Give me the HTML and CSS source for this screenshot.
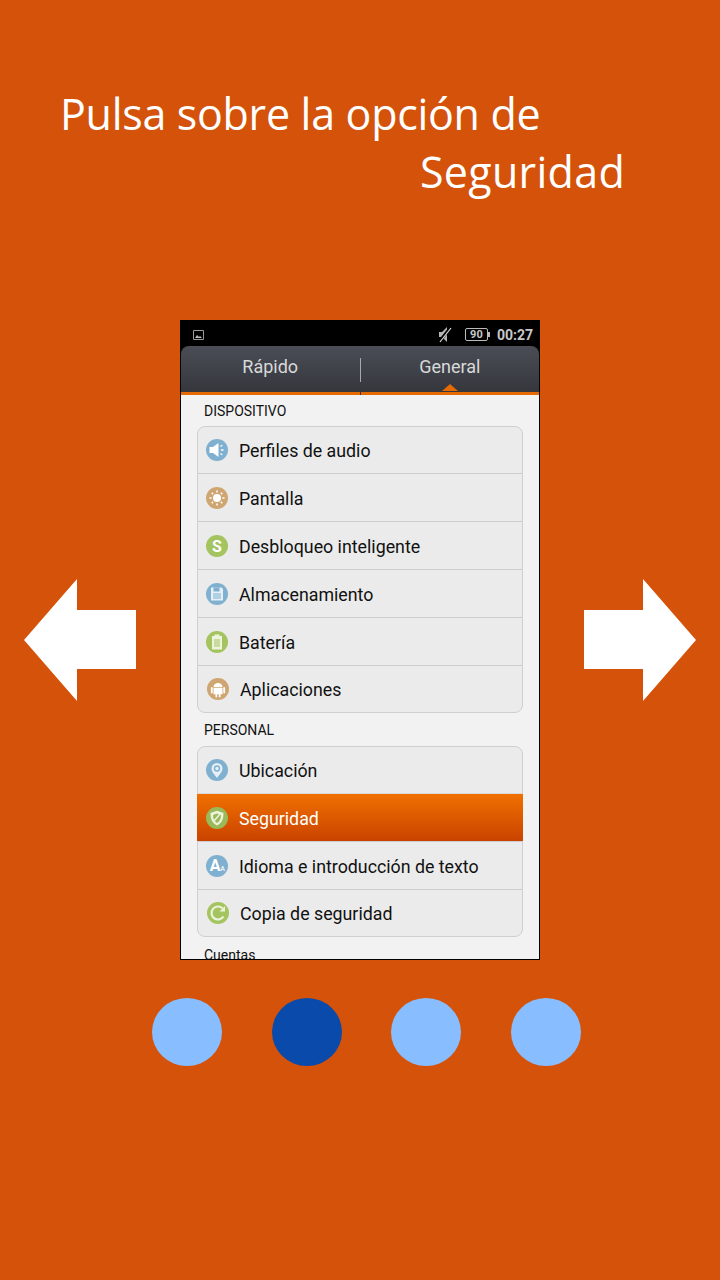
FILE: index.html
```html
<!DOCTYPE html>
<html lang="en">
<head>
    <meta charset="UTF-8">
    <meta name="viewport" content="width=device-width, initial-scale=1.0">
    <title>Seguridad</title>
    <link rel="stylesheet" href="styles.css">
</head>
<body>
    <header class="title">
        <p class="title-line">Pulsa sobre la opción de</p>
        <p class="title-line title-line-end">Seguridad</p>
    </header>

    <main class="stage">
        <svg class="arrow" viewBox="0 0 112 122"><path d="M0 61 53 0V31H112V90H53V122Z"/></svg>

        <div class="phone">
            <div class="status">
                <svg class="status-pic" viewBox="0 0 11 10"><path d="M.5.5h10v9H.5z" fill="none" stroke="#999"/><path d="M2 8 4 5l2 2 1-1 2 2z" fill="#bbb"/></svg>
                <svg class="status-mute" viewBox="0 0 14 17"><path d="M1 6h3l5-5v15l-5-5H1z" fill="#b5b5b5"/><path d="M1 16 13 1" stroke="#000" stroke-width="3"/><path d="M2 16 13 2" stroke="#ddd" stroke-width="1.200"/></svg>
                <div class="battery"><span class="battery-body">90</span><span class="battery-tip"></span></div>
                <span class="clock">00:27</span>
            </div>

            <nav class="tabs">
                <span class="tab">Rápido</span>
                <span class="tab-divider"></span>
                <span class="tab tab-active">General</span>
            </nav>

            <div class="content">
                <h2 class="section">DISPOSITIVO</h2>
                <ul class="group">
                    <li class="row">
                        <svg class="icon" viewBox="0 0 22 22"><circle cx="11" cy="11" r="11" fill="#7fb0d0"/><path d="M3.500 8h3.500l5.500-4v14L7 14H3.500z" fill="#fff"/><path d="M14.500 7.500l1.800-1.200M15 11h2.500M14.500 14.500l1.800 1.200" stroke="#fff" stroke-width="1.300"/></svg>
                        <span>Perfiles de audio</span>
                    </li>
                    <li class="row">
                        <svg class="icon" viewBox="0 0 22 22"><circle cx="11" cy="11" r="11" fill="#cfa672"/><circle cx="11" cy="11" r="4" fill="#fff"/><path d="M11 3.500v2M11 16.500v2M3.500 11h2M16.500 11h2M5.700 5.700l1.400 1.400M14.900 14.900l1.400 1.400M5.700 16.300l1.400-1.400M14.900 7.100l1.400-1.400" stroke="#fff" stroke-width="1.500"/></svg>
                        <span>Pantalla</span>
                    </li>
                    <li class="row">
                        <svg class="icon" viewBox="0 0 22 22"><circle cx="11" cy="11" r="11" fill="#a3c45f"/><text class="icon-letter" x="11" y="16.500" text-anchor="middle">S</text></svg>
                        <span>Desbloqueo inteligente</span>
                    </li>
                    <li class="row">
                        <svg class="icon" viewBox="0 0 22 22"><circle cx="11" cy="11" r="11" fill="#7fb0d0"/><path d="M5 4.500h10.500L17 6v11.500H5z" fill="#e6eff5"/><path d="M7.500 4.500h6v4h-6z" fill="#7fb0d0"/><path d="M7 11h8M7 13h8M7 15h8" stroke="#7fb0d0" stroke-width="1"/></svg>
                        <span>Almacenamiento</span>
                    </li>
                    <li class="row">
                        <svg class="icon" viewBox="0 0 22 22"><circle cx="11" cy="11" r="11" fill="#a3c45f"/><path d="M8.500 3.500h5V5H16v13.500H6V5h2.500z" fill="#eef3dc"/><path d="M8 9h6M8 11h6M8 13h6M8 15h6" stroke="#a3c45f" stroke-width="1"/></svg>
                        <span>Batería</span>
                    </li>
                    <li class="row row-shift">
                        <svg class="icon" viewBox="0 0 22 22"><circle cx="11" cy="11" r="11" fill="#cfa672"/><path d="M6.500 9a4.500 4 0 0 1 9 0z" fill="#fff"/><path d="M6.500 9.800h9v6.400h-2v3h-1.700v-3h-1.600v3H8.500v-3h-2z" fill="#fff"/><path d="M4.800 10v4.500M17.200 10v4.500" stroke="#fff" stroke-width="1.800" stroke-linecap="round"/></svg>
                        <span>Aplicaciones</span>
                    </li>
                </ul>

                <h2 class="section section-next">PERSONAL</h2>
                <ul class="group">
                    <li class="row">
                        <svg class="icon" viewBox="0 0 22 22"><circle cx="11" cy="11" r="11" fill="#7fb0d0"/><path d="M11 19C8 15 5.500 12.500 5.500 9.500a5.500 5.500 0 0 1 11 0C16.500 12.500 14 15 11 19z" fill="#e6eff5"/><circle cx="11" cy="9.500" r="2.500" fill="none" stroke="#7fb0d0" stroke-width="1.400"/></svg>
                        <span>Ubicación</span>
                    </li>
                    <li class="row row-selected">
                        <svg class="icon" viewBox="0 0 22 22"><circle cx="11" cy="11" r="11" fill="#9aba5a"/><path d="M11 3.800 17.500 6c0 6-1.500 10-6.500 12.500C6 16 4.500 12 4.500 6z" fill="#eef3dc"/><path d="M11 6.500 15 8c0 3.500-1 6-4 8-3-2-4-4.500-4-8z" fill="#9aba5a"/><path d="M8 14l6-7" stroke="#eef3dc" stroke-width="1.500"/></svg>
                        <span>Seguridad</span>
                    </li>
                    <li class="row">
                        <svg class="icon" viewBox="0 0 22 22"><circle cx="11" cy="11" r="11" fill="#7fb0d0"/><text class="icon-letter" x="9" y="16" text-anchor="middle">A</text><text class="icon-letter-small" x="16.500" y="16" text-anchor="middle">A</text></svg>
                        <span>Idioma e introducción de texto</span>
                    </li>
                    <li class="row row-shift">
                        <svg class="icon" viewBox="0 0 22 22"><circle cx="11" cy="11" r="11" fill="#a3c45f"/><path d="M16.500 14.500A6.500 6.500 0 1 1 15.500 6.300" fill="none" stroke="#eef3dc" stroke-width="2.200"/><path d="M12.500 9.500h5.500V4z" fill="#eef3dc"/></svg>
                        <span>Copia de seguridad</span>
                    </li>
                </ul>

                <h2 class="section section-last">Cuentas</h2>
            </div>
        </div>

        <svg class="arrow" viewBox="0 0 112 122"><path d="M112 61 59 0V31H0V90H59V122Z"/></svg>
    </main>

    <div class="dots">
        <span class="dot"></span>
        <span class="dot dot-active"></span>
        <span class="dot"></span>
        <span class="dot"></span>
    </div>
</body>
</html>
```

FILE: styles.css
```css
* {
    box-sizing: border-box;
}
body {
    margin: 0;
    height: 1280px;
    overflow: hidden;
    background-color: #d4520a;
    font-family: Roboto, sans-serif;
}

/* heading */
.title {
    height: 320px;
    padding: 85px 95px 0 60px;
    font-family: "Open Sans", sans-serif;
    color: #fff;
}
.title-line {
    margin: 0;
    font-size: 43px;
    line-height: 58px;
    letter-spacing: -0.3px;
}
.title-line-end {
    text-align: right;
    letter-spacing: 0.3px;
}

/* arrows and phone */
.stage {
    display: flex;
    align-items: center;
    justify-content: space-between;
    height: 640px;
    padding: 0 24px;
}
.arrow {
    width: 112px;
    height: 122px;
    fill: #fff;
}
.phone {
    display: flex;
    flex-direction: column;
    width: 360px;
    height: 640px;
    overflow: hidden;
    background-color: #000;
    border: 1px solid #000;
    border-top: 0;
}

.status {
    display: flex;
    align-items: center;
    flex-shrink: 0;
    height: 26px;
    padding: 3px 6px 0 12px;
    color: #c8c8c8;
}
.status-pic {
    width: 11px;
    height: 10px;
}
.status-mute {
    width: 14px;
    height: 17px;
    margin-left: auto;
}
.battery {
    display: flex;
    align-items: center;
    margin-left: 13px;
}
.battery-body {
    width: 23px;
    height: 13px;
    border: 1px solid #bbb;
    border-radius: 2px;
    font-size: 11px;
    font-weight: 700;
    line-height: 11px;
    text-align: center;
}
.battery-tip {
    width: 2px;
    height: 5px;
    background-color: #bbb;
}
.clock {
    margin-left: 7px;
    font-size: 14px;
    font-weight: 700;
}

.tabs {
    display: flex;
    align-items: center;
    flex-shrink: 0;
    height: 49px;
    padding-bottom: 5px;
    color: #d9d9d9;
    font-size: 18px;
    background: linear-gradient(#4a4d55, #35373d);
    border-bottom: 3px solid #e56a00;
    border-radius: 8px 8px 0 0;
}
.tab {
    position: relative;
    flex: 1;
    text-align: center;
}
.tab-divider {
    position: relative;
    width: 1px;
    height: 24px;
    margin-top: 6px;
    background-color: #a9a9a9;
}
/* dark nick in the orange line under the divider */
.tab-divider::after {
    content: "";
    position: absolute;
    left: 0;
    top: 34px;
    width: 1px;
    height: 3px;
    background-color: #35373d;
}
.tab-active::after {
    content: "";
    position: absolute;
    left: 50%;
    bottom: -14px;
    margin-left: -8px;
    border: 8px solid transparent;
    border-top: 0;
    border-bottom: 7px solid #e56a00;
}

.content {
    flex: 1;
    padding: 0 16px;
    overflow: hidden;
    background-color: #f2f2f2;
}
.section {
    margin: 8px 0 7px 7px;
    font-size: 14px;
    font-weight: 400;
    line-height: 16px;
    color: #111;
}
.section-next {
    margin-top: 9px;
    margin-bottom: 8px;
}
.section-last {
    margin-top: 10px;
}

.group {
    margin: 0;
    padding: 0;
    list-style: none;
    background-color: #ebebeb;
    border: 1px solid #cfcfcf;
    border-radius: 8px;
}
.row {
    display: flex;
    align-items: center;
    gap: 11px;
    height: 48px;
    padding-left: 8px;
    font-size: 17.8px;
    color: #111;
    border-top: 1px solid #cdcdcd;
}
/* labels sit a touch below the icon centre */
.row span {
    margin-top: 2px;
}
.row:first-child {
    height: 46px;
    border-top: 0;
}
.row:first-child span,
.row:last-child span {
    margin-top: 0;
}
.row:last-child {
    height: 47px;
}
.row-shift {
    padding-left: 9px;
}
.row-selected {
    margin: 0 -1px;
    padding-left: 9px;
    color: #fff;
    background: linear-gradient(#f07000, #c94300);
    border-top-color: #d8d8d8;
}
.icon {
    flex-shrink: 0;
    width: 22px;
    height: 22px;
}
.icon-letter {
    font-size: 16px;
    font-weight: 700;
    fill: #fff;
}
.icon-letter-small {
    font-size: 7px;
    font-weight: 700;
    fill: #e6eff5;
}

/* pager */
.dots {
    display: flex;
    gap: 49.67px;
    margin-top: 38px;
    padding-left: 152px;
}
.dot {
    width: 70px;
    height: 68px;
    border-radius: 50%;
    background-color: #88beff;
}
.dot-active {
    background-color: #094aab;
}
```
